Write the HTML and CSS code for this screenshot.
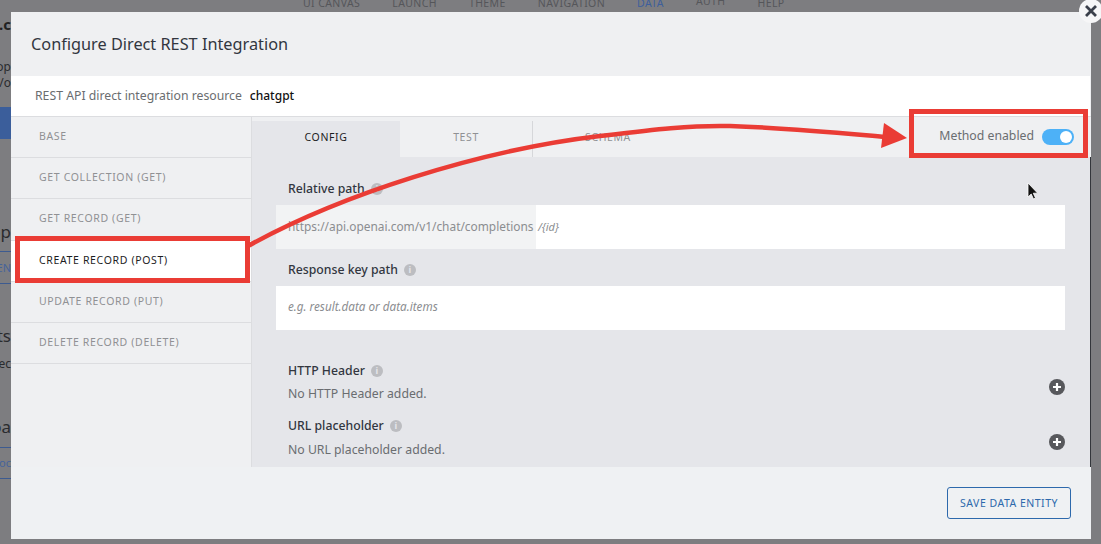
FILE: index.html
```html
<!DOCTYPE html>
<html lang="en">
<head>
<meta charset="utf-8">
<title>Configure Direct REST Integration</title>
<link rel="stylesheet" href="styles.css">
</head>
<body>
<div class="backdrop">
  <nav class="topnav">
    <span>UI CANVAS</span><span>LAUNCH</span><span>THEME</span><span>NAVIGATION</span><span class="nav-on">DATA</span><span class="nav-up">AUTH</span><span>HELP</span>
  </nav>
  <div class="strip">
    <div class="s s1">.c</div>
    <div class="s s2">op</div>
    <div class="s s3">/o</div>
    <div class="s s4"></div>
    <div class="s s5">op</div>
    <div class="s s6">EN</div>
    <div class="s s7">ts</div>
    <div class="s s8">ec</div>
    <div class="s s9">oa</div>
    <div class="s s10">oc</div>
  </div>
</div>

<section class="modal">
  <header class="m-head"><h1>Configure Direct REST Integration</h1></header>
  <div class="resource"><span class="res-label">REST API direct integration resource</span><strong>chatgpt</strong></div>
  <div class="m-body">
    <aside class="side">
      <div class="item">BASE</div>
      <div class="item">GET COLLECTION (GET)</div>
      <div class="item">GET RECORD (GET)</div>
      <div class="item active">CREATE RECORD (POST)</div>
      <div class="item">UPDATE RECORD (PUT)</div>
      <div class="item">DELETE RECORD (DELETE)</div>
    </aside>
    <main class="main">
      <div class="tabs">
        <div class="tab tab-on">CONFIG</div>
        <div class="tab tab-test">TEST</div>
        <div class="tab tab-schema">SCHEMA</div>
        <div class="enable"><span class="enable-text">Method enabled</span><span class="toggle"><i></i></span></div>
      </div>
      <div class="panel">
        <div class="label label-first">Relative path <span class="info">i</span></div>
        <div class="input"><span class="prefix">https://api.openai.com/v1/chat/completions</span><em class="suffix">/{id}</em></div>
        <div class="label label-second">Response key path <span class="info">i</span></div>
        <div class="input input-plain"><em>e.g. result.data or data.items</em></div>
        <div class="row row-first">
          <div><div class="label">HTTP Header <span class="info">i</span></div><p class="none">No HTTP Header added.</p></div>
          <svg class="plus" viewBox="0 0 16 16" width="16" height="16"><circle cx="8" cy="8" r="8" fill="#57585c"/><path d="M8 4v8M4 8h8" stroke="#fff" stroke-width="2.2"/></svg>
        </div>
        <div class="row row-second">
          <div><div class="label">URL placeholder <span class="info">i</span></div><p class="none none-tall">No URL placeholder added.</p></div>
          <svg class="plus" viewBox="0 0 16 16" width="16" height="16"><circle cx="8" cy="8" r="8" fill="#57585c"/><path d="M8 4v8M4 8h8" stroke="#fff" stroke-width="2.2"/></svg>
        </div>
      </div>
    </main>
  </div>
  <footer class="m-foot"><button class="save">SAVE DATA ENTITY</button></footer>
</section>

<div class="close"><svg viewBox="0 0 12 12" width="12" height="12"><path d="M1 1l10 10M11 1L1 11" stroke="#3a3f4a" stroke-width="2.8"/></svg></div>

<svg class="notes" viewBox="0 0 1101 544" width="1101" height="544">
  <rect x="17.5" y="238.5" width="230" height="42" fill="none" stroke="#ea3c35" stroke-width="5"/>
  <rect x="911.5" y="111.5" width="174" height="44" fill="none" stroke="#ea3c35" stroke-width="5"/>
  <path d="M248 246C340 195 480 150 600 136C650 130 690 125 730 126C790 128 840 133 886 137" fill="none" stroke="#ea3c35" stroke-width="4.5"/>
  <path d="M907 138L881 148L884 123Z" fill="#ea3c35"/>
  <path d="M1028 183v14l3.2-3 2.3 5 2-1-2.2-4.8h4.4z" fill="#111" stroke="#fff" stroke-width=".8"/>
</svg>
</body>
</html>
```
FILE: styles.css
```css
* { box-sizing: border-box; }
html, body { margin: 0; height: 544px; overflow: hidden; }
body { position: relative; background: #7d7d80; font-family: "Noto Sans", "Open Sans", sans-serif; color: #32363a; }

.backdrop { height: 544px; }
.topnav { display: flex; height: 12px; padding-left: 303px; font-size: 10.5px; letter-spacing: .4px; line-height: 6px; color: #55565a; overflow: hidden; }
.topnav span { margin-right: 32px; white-space: nowrap; }
.topnav .nav-on { color: #3d5f9c; }
.topnav .nav-up { line-height: 3px; }
.strip { width: 11px; overflow: hidden; display: flex; flex-direction: column; white-space: nowrap; color: #2a2b2e; }
.s { flex: none; display: flex; justify-content: flex-end; font-size: 12px; line-height: 16px; height: 16px; overflow: hidden; }
.s1 { margin-top: 4px; font-size: 15px; font-weight: 700; color: #222; }
.s2 { margin-top: 27px; }
.s4 { margin-top: 16px; height: 32px; background: #3b5e9b; }
.s5 { margin-top: 83px; height: 20px; font-size: 17px; line-height: 20px; }
.s6 { margin-top: 9px; height: 33px; line-height: 31px; font-size: 11px; color: #46639b; border-top: 1px solid #3d5b90; border-bottom: 1px solid #3d5b90; }
.s7 { margin-top: 42px; height: 20px; font-size: 17px; line-height: 20px; }
.s8 { margin-top: 10px; }
.s9 { margin-top: 45px; height: 20px; font-size: 17px; line-height: 20px; }
.s10 { margin-top: 10px; height: 32px; line-height: 30px; font-size: 11px; color: #46639b; border-top: 1px solid #3d5b90; border-bottom: 1px solid #3d5b90; }

.modal { position: absolute; left: 11px; top: 12px; width: 1080px; height: 527px; display: flex; flex-direction: column; background: #eff0f2; border-radius: 0 0 2px 2px; }
.m-head { height: 64px; padding: 21px 20px 0; flex: none; }
.m-head h1 { margin: 0; font-size: 16.3px; line-height: 22px; font-weight: 400; color: #32363f; }
.resource { height: 40px; flex: none; background: #fff; display: flex; align-items: center; padding: 0 24px 2px; font-size: 12.25px; margin-right: 1px; }
.res-label { color: #6a6d70; margin-right: 8px; }
.resource strong { font-size: 12px; font-weight: 500; color: #111; }
.m-body { flex: 1; display: flex; min-height: 0; border-top: 1px solid #dcdde0; }
.side { width: 241px; flex: none; border-right: 1px solid #dcdde0; }
.item { height: 41.2px; border-bottom: 1px solid #dcdde0; padding-left: 28px; font-size: 10.5px; letter-spacing: .65px; line-height: 38px; color: #909194; white-space: nowrap; }
.item.active { background: #fff; color: #1d1d1f; }
.main { flex: 1; display: flex; flex-direction: column; min-width: 0; }
.tabs { height: 40px; flex: none; display: flex; padding-top: 4px; }
.tab { font-size: 10.5px; letter-spacing: .6px; line-height: 32px; text-align: center; color: #909194; }
.tab-on { width: 148px; background: #e5e6ea; color: #1d1d1f; }
.tab-test { width: 133px; border-right: 1px solid #d6d7da; }
.tab-schema { width: 150px; }
.enable { margin-left: auto; display: flex; align-items: center; height: 32px; padding-right: 17px; font-size: 12.25px; color: #6a6d70; }
.enable-text { margin-top: -3px; }
.toggle { width: 32px; height: 16px; border-radius: 8px; background: #4db1f7; margin-left: 8px; padding: 2px; display: flex; justify-content: flex-end; }
.toggle i { width: 12px; height: 12px; border-radius: 50%; background: #fff; }
.panel { flex: 1; background: #e5e6ea; padding: 0 25px 0 24px; border-right: 1px solid #33363b; }
.label { font-size: 12.25px; line-height: 16px; font-weight: 500; color: #32363f; padding-left: 12px; display: flex; align-items: center; }
.label-first { margin-top: 24px; }
.label-second { margin-top: 13px; }
.info { width: 12px; height: 12px; margin-left: 6px; border-radius: 50%; background: #bcbdc1; color: #e5e6ea; font-size: 9px; line-height: 12px; text-align: center; font-weight: 700; }
.input { height: 44px; margin-top: 8px; background: #fff; display: flex; align-items: center; font-size: 11.7px; color: #8b8d90; }
.prefix { width: 260px; height: 44px; padding-left: 12px; background: #f2f3f4; line-height: 42px; font-size: 11.9px; color: #8b8d90; white-space: nowrap; overflow: hidden; flex: none; }
.suffix { margin: 0 0 2px 2px; font-size: 11px; }
.input-plain { padding: 0 0 4px 12px; }
.row { display: flex; align-items: center; justify-content: space-between; }
.row-first { margin-top: 33px; }
.row-second { margin-top: 16px; }
.none { margin: 7px 0 0 12px; font-size: 12.25px; line-height: 16px; color: #6a6d70; }
.none-tall { margin-top: 8px; }
.plus { margin-top: 8px; flex: none; }
.m-foot { height: 72px; flex: none; display: flex; justify-content: flex-end; align-items: flex-start; padding: 20px 20px 0 0; background: #eff1f3; }
.save { width: 124px; height: 32px; background: transparent; border: 1px solid #2d69ac; border-radius: 3px; color: #2d69ac; font: 400 10.5px "Noto Sans", sans-serif; letter-spacing: .5px; padding: 0; }
.close { position: absolute; left: 1079px; top: -1px; width: 24px; height: 24px; border-radius: 50%; background: #f6f6f7; display: flex; align-items: center; justify-content: center; }
.notes { position: absolute; left: 0; top: 0; pointer-events: none; }
```
